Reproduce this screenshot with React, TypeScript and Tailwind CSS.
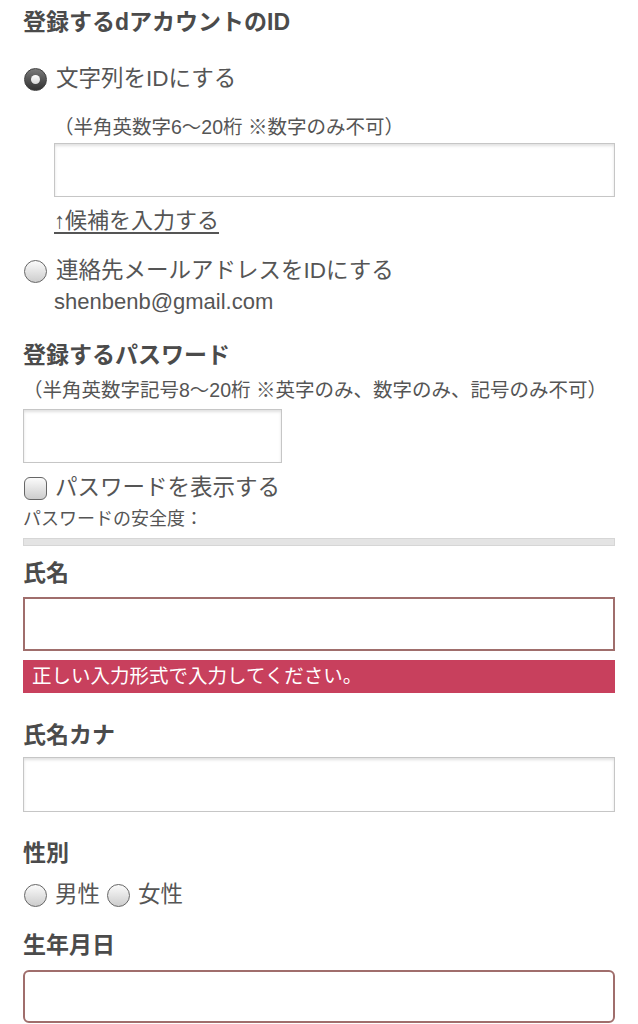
import type React from "react";

const font = { fontFamily: '"Liberation Sans", "Noto Sans CJK JP", sans-serif' };

const Radio: React.FC<{ checked?: boolean }> = ({ checked }) => (
  <span
    className={
      checked
        ? "flex h-[23px] w-[23px] shrink-0 items-center justify-center rounded-full border-[1.5px] border-[#3f3f3f] bg-gradient-to-b from-[#7a7a7a] to-[#333]"
        : "h-[23px] w-[23px] shrink-0 rounded-full border-[1.5px] border-[#666] bg-gradient-to-b from-[#fbfbfb] to-[#cdcdcd]"
    }
  >
    {checked && <span className="h-[9px] w-[9px] rounded-full bg-gradient-to-b from-white to-[#d8d8d8]" />}
  </span>
);

const Checkbox: React.FC = () => (
  <span className="h-[23px] w-[23px] shrink-0 rounded-[6px] border-[1.5px] border-[#666] bg-gradient-to-b from-[#fbfbfb] to-[#cdcdcd]" />
);

const Heading: React.FC<{ children: React.ReactNode; className?: string }> = ({ children, className }) => (
  <h2 className={`text-[23px] font-bold leading-[30px] text-[#4b4b4b] ${className ?? ""}`}>{children}</h2>
);

export default function App() {
  return (
    <div style={font} className="min-h-[1024px] w-[638px] overflow-hidden bg-white px-[23px] pt-[7px] text-[#555]">
      {/* dアカウントID */}
      <Heading>登録するdアカウントのID</Heading>

      <label className="mt-[27px] flex h-[30px] items-center gap-[9px] pl-[1px] text-[22.5px]">
        <Radio checked />
        <span>文字列をIDにする</span>
      </label>

      <div className="pl-[31px]">
        <p className="mt-[19px] text-[19.5px] leading-[28px]">（半角英数字6〜20桁 ※数字のみ不可）</p>
        <div className="mt-[2px] h-[54px] w-full border border-[#c6c6c6] bg-white shadow-[inset_0_2px_3px_rgba(0,0,0,0.12)]" />
        <a href="#" className="mt-[9px] block text-[22px] leading-[30px] text-[#555] underline underline-offset-[4px]">
          ↑候補を入力する
        </a>
      </div>

      <label className="mt-[20px] flex h-[30px] items-center gap-[9px] pl-[1px] text-[22.5px]">
        <Radio />
        <span>連絡先メールアドレスをIDにする</span>
      </label>
      <p className="mt-[1px] pl-[31px] text-[22px] leading-[30px]">shenbenb@gmail.com</p>

      {/* パスワード */}
      <Heading className="mt-[23px]">登録するパスワード</Heading>
      <p className="mt-[6px] whitespace-nowrap text-[19.5px] leading-[28px]">
        （半角英数字記号8〜20桁 ※英字のみ、数字のみ、記号のみ不可）
      </p>
      <div className="mt-[5px] h-[54px] w-[259px] border border-[#c6c6c6] bg-white shadow-[inset_0_2px_3px_rgba(0,0,0,0.12)]" />

      <label className="mt-[10px] flex h-[30px] items-center gap-[8px] pl-[1px] text-[22.5px]">
        <Checkbox />
        <span>パスワードを表示する</span>
      </label>
      <p className="mt-[4px] text-[18px] leading-[24px]">パスワードの安全度：</p>
      <div className="mt-[7px] h-[8px] w-full border border-[#d6d6d6] bg-[#e4e4e4]" />

      {/* 氏名 */}
      <Heading className="mt-[12px]">氏名</Heading>
      <div className="mt-[9px] h-[54px] w-full border-2 border-[#a06e6c] bg-white" />
      <div className="mt-[9px] flex h-[33px] items-center bg-[#c8405d] pl-[9px] text-[19.5px] text-white">
        正しい入力形式で入力してください。
      </div>

      {/* 氏名カナ */}
      <Heading className="mt-[27px]">氏名カナ</Heading>
      <div className="mt-[7px] h-[55px] w-full border border-[#c6c6c6] bg-white shadow-[inset_0_2px_3px_rgba(0,0,0,0.12)]" />

      {/* 性別 */}
      <Heading className="mt-[26px]">性別</Heading>
      <div className="mt-[12px] flex h-[30px] items-center pl-[1px] text-[22.5px]">
        <label className="flex items-center gap-[8px]">
          <Radio />
          <span>男性</span>
        </label>
        <label className="ml-[7px] flex items-center gap-[8px]">
          <Radio />
          <span>女性</span>
        </label>
      </div>

      {/* 生年月日 */}
      <Heading className="mt-[20px]">生年月日</Heading>
      <div className="mt-[10px] h-[53px] w-full rounded-[6px] border-2 border-[#a06e6c] bg-white" />
    </div>
  );
}
